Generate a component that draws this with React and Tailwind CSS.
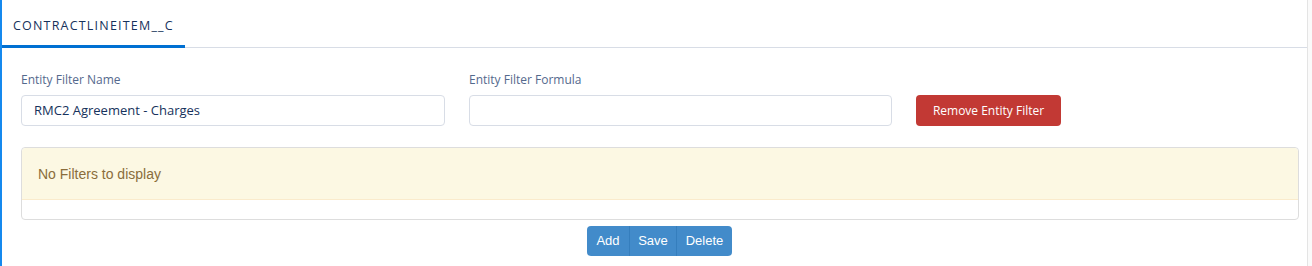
export default function App() {
  return (
    <div className="w-[1312px] h-[266px] flex bg-white overflow-hidden">
      <div className="w-[1307px] h-full border-l-2 border-[#1589ee] flex flex-col">
        {/* Tab bar */}
        <div className="h-[48px] border-b border-[#d8dde6] flex items-end">
          <div
            className="w-[183px] h-full flex items-center pl-[11px] pt-[6px] border-b-[3px] border-[#0070d2] -mb-px text-[12.5px] tracking-[1.2px] text-[#16325c]"
            style={{ fontFamily: '"Open Sans", sans-serif' }}
          >
            CONTRACTLINEITEM__C
          </div>
        </div>

        {/* Form row */}
        <div
          className="flex items-end pl-[19px] pt-[24px]"
          style={{ fontFamily: '"Open Sans", sans-serif' }}
        >
          <div className="flex flex-col w-[424px]">
            <label className="text-[12px] text-[#54698d] leading-[16px] mb-[7px]">Entity Filter Name</label>
            <div className="h-[31px] border border-[#d8dde6] rounded-[4px] flex items-center pl-[12px] text-[13px] text-[#16325c]">
              RMC2 Agreement - Charges
            </div>
          </div>
          <div className="flex flex-col w-[423px] ml-[24px]">
            <label className="text-[12px] text-[#54698d] leading-[16px] mb-[7px]">Entity Filter Formula</label>
            <div className="h-[31px] border border-[#d8dde6] rounded-[4px]"></div>
          </div>
          <button className="ml-[24px] w-[145px] h-[31px] bg-[#c23934] rounded-[4px] text-white text-[12px] flex items-center justify-center">
            Remove Entity Filter
          </button>
        </div>

        {/* Panel */}
        <div className="pl-[19px] pt-[21px]" style={{ fontFamily: '"Liberation Sans", Arial, sans-serif' }}>
          <div className="w-[1278px] h-[73px] border border-[#dddddd] rounded-[4px] flex flex-col">
            <div className="h-[52px] bg-[#fcf8e3] border-b border-[#faebcc] rounded-t-[4px] flex items-center pl-[16px] pt-[2px] text-[14px] text-[#8a6d3b]">
              No Filters to display
            </div>
          </div>
        </div>

        {/* Buttons */}
        <div className="flex justify-center pt-[6px] pl-[10px]" style={{ fontFamily: '"Liberation Sans", Arial, sans-serif' }}>
          <div className="flex h-[30px] rounded-[4px] overflow-hidden text-white text-[13px] font-medium">
            <button className="w-[43px] bg-[#428bca] border-r border-[#357ebd]">Add</button>
            <button className="w-[47px] bg-[#428bca] border-r border-[#357ebd]">Save</button>
            <button className="w-[55px] bg-[#428bca]">Delete</button>
          </div>
        </div>
      </div>
      <div className="w-px h-full bg-[#e4e4e4]"></div>
      <div className="flex-1 h-full bg-[#fafafa]"></div>
    </div>
  );
}
